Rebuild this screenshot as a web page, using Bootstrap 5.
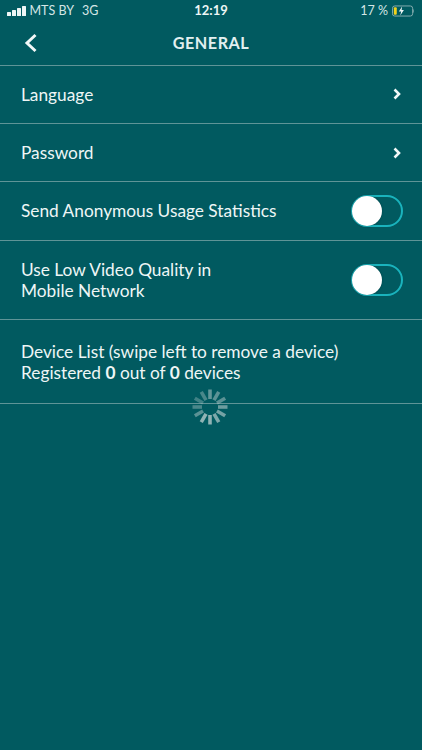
<!doctype html>
<html lang="en">
<head>
<meta charset="utf-8">
<title>General</title>
<link rel="stylesheet" href="https://cdn.jsdelivr.net/npm/bootstrap@5.3.0/dist/css/bootstrap.min.css">
<style>
html,body{height:100%}
body{background:#015a60;color:#eef6f6;font-family:"Lato","Liberation Sans",sans-serif;overflow:hidden}
.screen{width:422px;height:750px;position:relative}
.statusbar{height:22px;padding:0 8px 0 7px;font-size:12.5px;color:#d5e6e6;position:relative}
.statusbar .clock{position:absolute;left:0;right:0;text-align:center;font-weight:700;font-size:13px;color:#eef6f6}
.signal{gap:1.5px;margin-right:4px}
.signal i{display:block;width:3.5px;background:#eef6f6;border-radius:.5px}
.batt{display:block}
.topbar{height:43.5px;position:relative;border-bottom:1px solid #5f9497}
.topbar .ttl{font-size:16.2px;font-weight:700;letter-spacing:.5px;color:#e2f0f0}
.backbtn{position:absolute;left:24px;top:11px}
.setrow{padding:0 19px 0 21px;border-bottom:1px solid #5f9497;font-size:17.3px;line-height:21px}
.h58{height:58.4px}
.h79{height:79px}
.h84{height:84px;padding-top:2px}
.sw{width:52px;height:32px;border:2px solid #1ab3bd;border-radius:16px;position:relative}
.sw::before{content:"";position:absolute;left:-1px;top:-1px;width:30px;height:30px;border-radius:50%;background:#fff;box-shadow:0 0 2px rgba(0,40,45,.5)}
.spinwrap{position:absolute;left:192px;top:389px}
.chev{margin-right:2px}
</style>
</head>
<body>
<div class="screen">
  <div class="statusbar d-flex align-items-center">
    <span class="signal d-flex align-items-end">
      <i style="height:4px"></i><i style="height:6px"></i><i style="height:8px"></i><i style="height:10px"></i>
    </span>
    <span>MTS BY</span><span class="ms-2">3G</span>
    <span class="clock">12:19</span>
    <span class="ms-auto">17 %</span>
    <svg class="batt ms-1" width="22" height="12" viewBox="0 0 24 12">
      <rect x=".5" y=".5" width="22" height="11" rx="2.5" fill="none" stroke="#8fb4b6"/>
      <rect x="2" y="2" width="3.2" height="8" rx="1" fill="#f2d21b"/>
      <path d="M11 1 L7.5 6.6 H10 L9 11 L13 5 H10.5 Z" fill="#eef6f6"/>
      <path d="M23.5 4.5 q1 1.5 0 3" fill="none" stroke="#8fb4b6"/>
    </svg>
  </div>
  <div class="topbar d-flex align-items-center justify-content-center">
    <svg class="backbtn" width="14" height="20" viewBox="0 0 14 20"><path d="M11.5 2 L3 10 L11.5 18" fill="none" stroke="#f2f8f8" stroke-width="3"/></svg>
    <span class="ttl">GENERAL</span>
  </div>
  <div class="setrow h58 d-flex align-items-center justify-content-between">
    <span>Language</span>
    <svg class="chev" width="8" height="12" viewBox="0 0 8 12"><path d="M1.5 1.5 L6 6 L1.5 10.5" fill="none" stroke="#f2f8f8" stroke-width="2.6"/></svg>
  </div>
  <div class="setrow h58 d-flex align-items-center justify-content-between">
    <span>Password</span>
    <svg class="chev" width="8" height="12" viewBox="0 0 8 12"><path d="M1.5 1.5 L6 6 L1.5 10.5" fill="none" stroke="#f2f8f8" stroke-width="2.6"/></svg>
  </div>
  <div class="setrow h58 d-flex align-items-center justify-content-between">
    <span>Send Anonymous Usage Statistics</span>
    <span class="sw"></span>
  </div>
  <div class="setrow h79 d-flex align-items-center justify-content-between">
    <span>Use Low Video Quality in<br>Mobile Network</span>
    <span class="sw"></span>
  </div>
  <div class="setrow h84 d-flex align-items-center">
    <span>Device List (swipe left to remove a device)<br>Registered <b>0</b> out of <b>0</b> devices</span>
  </div>
  <svg class="spinwrap" width="36" height="36" viewBox="-18 -18 36 36" stroke-width="3.6" stroke-linecap="butt" stroke="#b4caca">
    <line x1="0" y1="-17.5" x2="0" y2="-8" transform="rotate(0)" opacity=".55"/>
    <line x1="0" y1="-17.5" x2="0" y2="-8" transform="rotate(30)" opacity=".5"/>
    <line x1="0" y1="-17.5" x2="0" y2="-8" transform="rotate(60)" opacity=".5"/>
    <line x1="0" y1="-17.5" x2="0" y2="-8" transform="rotate(90)" opacity=".6"/>
    <line x1="0" y1="-17.5" x2="0" y2="-8" transform="rotate(120)" opacity=".65"/>
    <line x1="0" y1="-17.5" x2="0" y2="-8" transform="rotate(150)" opacity=".7"/>
    <line x1="0" y1="-17.5" x2="0" y2="-8" transform="rotate(180)" opacity=".8"/>
    <line x1="0" y1="-17.5" x2="0" y2="-8" transform="rotate(210)" opacity=".8"/>
    <line x1="0" y1="-17.5" x2="0" y2="-8" transform="rotate(240)" opacity=".5"/>
    <line x1="0" y1="-17.5" x2="0" y2="-8" transform="rotate(270)" opacity=".4"/>
    <line x1="0" y1="-17.5" x2="0" y2="-8" transform="rotate(300)" opacity=".35"/>
    <line x1="0" y1="-17.5" x2="0" y2="-8" transform="rotate(330)" opacity=".4"/>
  </svg>
</div>
<script src="https://cdn.jsdelivr.net/npm/bootstrap@5.3.0/dist/js/bootstrap.bundle.min.js"></script>
</body>
</html>
